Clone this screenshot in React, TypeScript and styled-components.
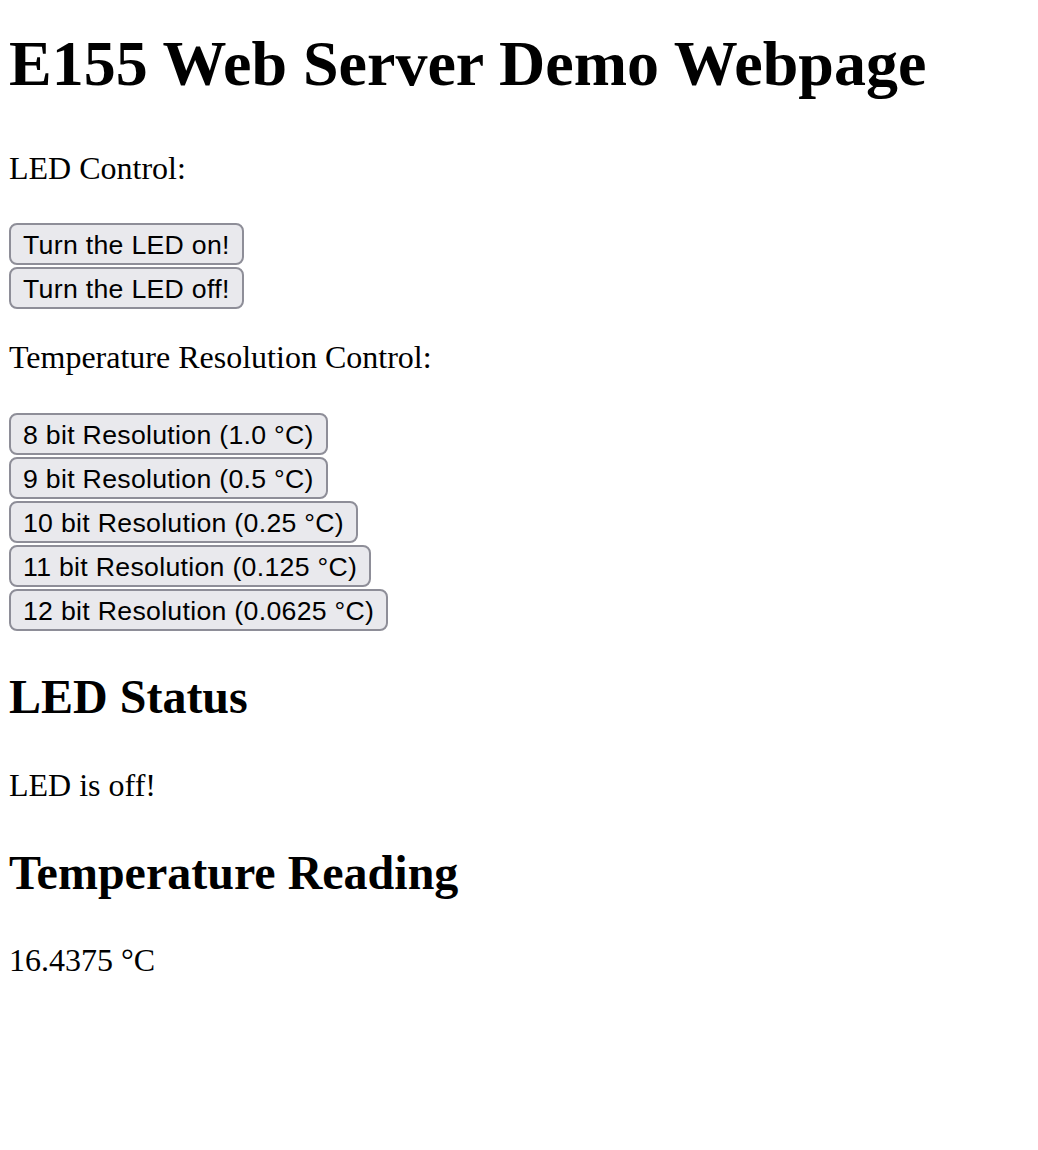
import styled, { createGlobalStyle } from "styled-components";

const GlobalStyle = createGlobalStyle`
  html, body {
    margin: 0;
    padding: 0;
    background: #ffffff;
    color: #000000;
  }
  body {
    font-family: "Liberation Serif", "Times New Roman", serif;
  }
`;

const Page = styled.div`
  display: flex;
  flex-direction: column;
  align-items: flex-start;
  padding: 0 9px;
`;

const Title = styled.h1`
  margin: 27px 0 0;
  font-size: 64px;
  line-height: 74px;
  font-weight: 700;
  white-space: nowrap;
`;

const Heading = styled.h2<{ $top: number }>`
  margin: ${(p) => p.$top}px 0 0;
  font-size: 48px;
  line-height: 55px;
  font-weight: 700;
`;

const Text = styled.p<{ $top: number }>`
  margin: ${(p) => p.$top}px 0 0;
  font-size: 32px;
  line-height: 37px;
`;

const ButtonStack = styled.form<{ $top: number }>`
  display: flex;
  flex-direction: column;
  align-items: flex-start;
  gap: 2px;
  margin: ${(p) => p.$top}px 0 0;
`;

const Button = styled.button`
  box-sizing: border-box;
  height: 42px;
  padding: 5px 12px 3px;
  font-family: "Liberation Sans", Arial, sans-serif;
  font-size: 26.67px;
  line-height: 30px;
  letter-spacing: 0.3px;
  color: #000000;
  background: #e9e9ed;
  border: 2px solid #8e8e98;
  border-radius: 8px;
  white-space: nowrap;
  cursor: pointer;
`;

const resolutions = [
  { bits: 8, step: "1.0" },
  { bits: 9, step: "0.5" },
  { bits: 10, step: "0.25" },
  { bits: 11, step: "0.125" },
  { bits: 12, step: "0.0625" },
];

const App = () => {
  return (
    <>
      <GlobalStyle />
      <Page>
        <Title>E155 Web Server Demo Webpage</Title>
        <Text $top={49}>LED Control:</Text>
        <ButtonStack $top={36} onSubmit={(e) => e.preventDefault()}>
          <Button type="button">Turn the LED on!</Button>
          <Button type="button">Turn the LED off!</Button>
        </ButtonStack>
        <Text $top={30}>Temperature Resolution Control:</Text>
        <ButtonStack $top={37} onSubmit={(e) => e.preventDefault()}>
          {resolutions.map((r) => (
            <Button type="button" key={r.bits}>
              {r.bits} bit Resolution ({r.step} °C)
            </Button>
          ))}
        </ButtonStack>
        <Heading $top={38}>LED Status</Heading>
        <Text $top={43}>LED is off!</Text>
        <Heading $top={41}>Temperature Reading</Heading>
        <Text $top={42}>16.4375 °C</Text>
      </Page>
    </>
  );
};

export default App;
